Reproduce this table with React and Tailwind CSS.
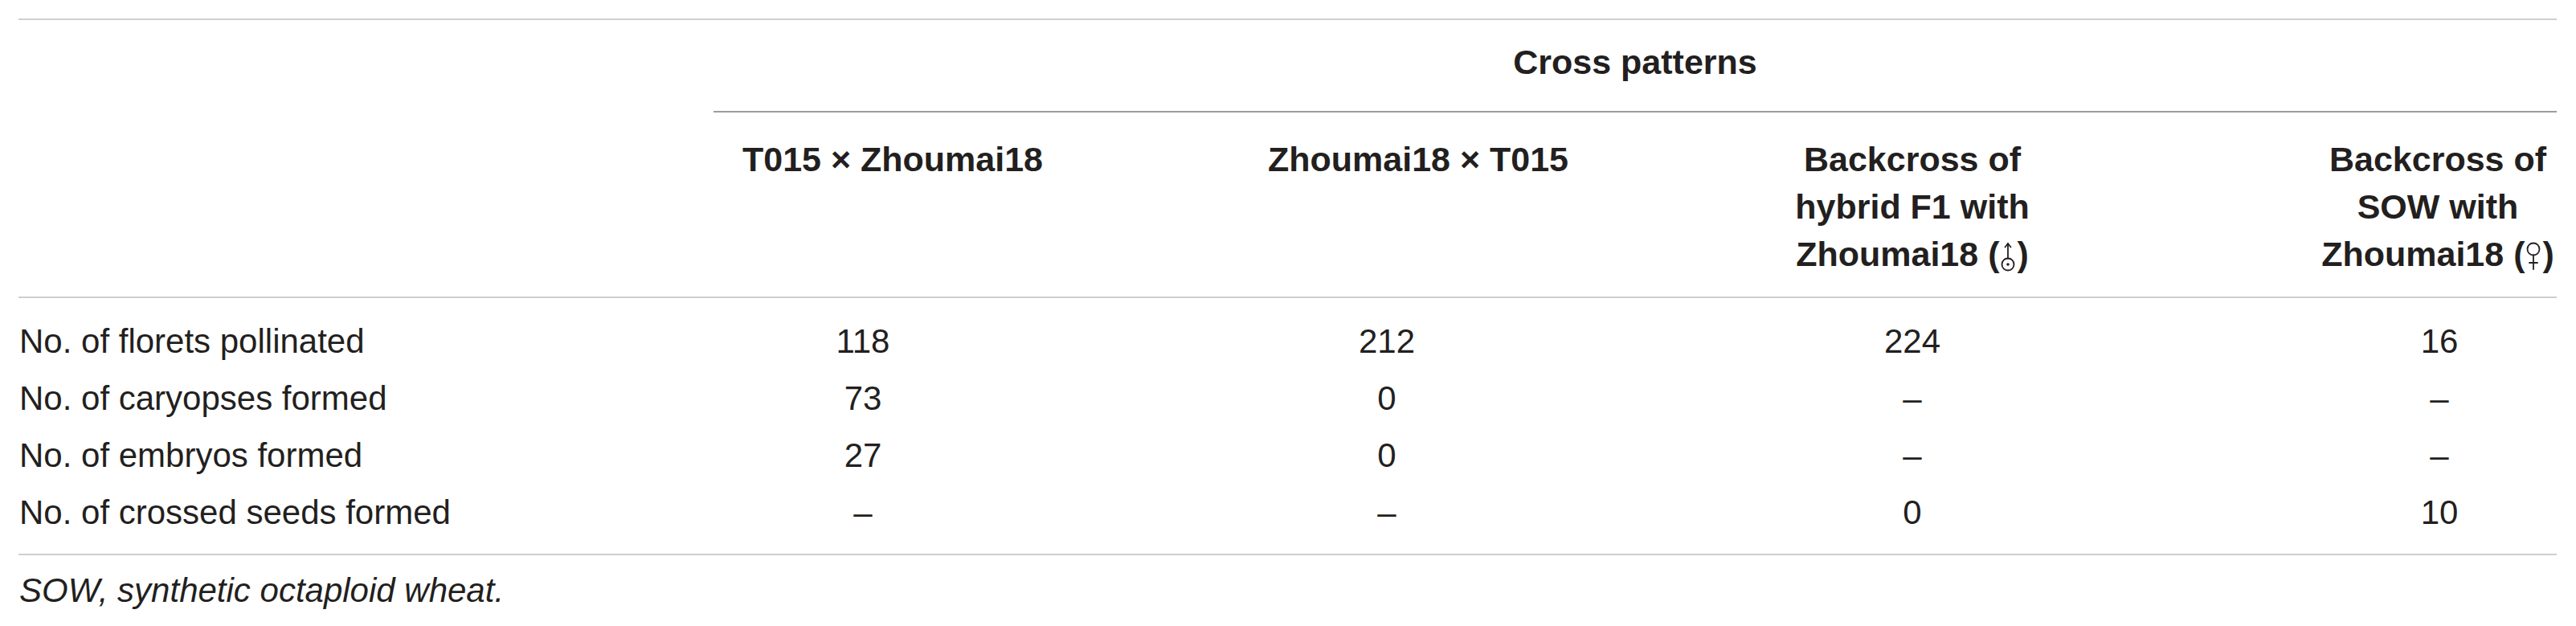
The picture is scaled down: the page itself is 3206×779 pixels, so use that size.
import React from "react";

const Male = () => (
  <svg className="inline-block align-[-8px] mx-[2px]" width="18" height="40" viewBox="0 0 18 40" fill="none" stroke="#231f20" strokeWidth="1.8" strokeLinecap="round" strokeLinejoin="round">
    <circle cx="9" cy="30" r="7.5" />
    <circle cx="9" cy="30" r="0.9" fill="#231f20" />
    <line x1="9" y1="22.5" x2="9" y2="4" />
    <polyline points="5.5,8.5 9,4 12.5,8.5" />
  </svg>
);

const Female = () => (
  <svg className="inline-block align-[-8px] mx-[2px]" width="18" height="40" viewBox="0 0 18 40" fill="none" stroke="#231f20" strokeWidth="1.8" strokeLinecap="round">
    <circle cx="9" cy="11" r="7.5" />
    <line x1="9" y1="18.5" x2="9" y2="36" />
    <line x1="4" y1="28" x2="14" y2="28" />
  </svg>
);

const rows = [
  ["No. of florets pollinated", "118", "212", "224", "16"],
  ["No. of caryopses formed", "73", "0", "–", "–"],
  ["No. of embryos formed", "27", "0", "–", "–"],
  ["No. of crossed seeds formed", "–", "–", "0", "10"],
];

export default function App() {
  return (
    <div className="w-[3206px] h-[779px] bg-white pt-[23px] px-[23px] text-[#231f20] font-['Liberation_Sans',Arial,sans-serif]">
      <div className="border-t-2 border-[#cfcfcf] w-[3159px]">
        {/* header row 1 */}
        <div className="grid grid-cols-[865px_2294px]">
          <div />
          <div className="border-b-2 border-[#9c9c9c] pt-[27px] pb-[36px] text-center text-[43px] leading-[50px] font-bold">
            Cross patterns
          </div>
        </div>
        {/* header row 2 */}
        <div className="grid grid-cols-[865px_652px_652px_376px_614px] border-b-2 border-[#cfcfcf] pt-[29px] pb-[23px] text-[43px] leading-[59px] font-bold">
          <div />
          <div className="pl-[36px] whitespace-nowrap">T015 × Zhoumai18</div>
          <div className="pl-[38px] whitespace-nowrap">Zhoumai18 × T015</div>
          <div className="text-center whitespace-nowrap">
            Backcross of
            <br />
            hybrid F1 with
            <br />
            Zhoumai18 (<Male />)
          </div>
          <div className="flex justify-end">
            <div className="w-[296px] text-center whitespace-nowrap">
              Backcross of
              <br />
              SOW with
              <br />
              Zhoumai18 (<Female />)
            </div>
          </div>
        </div>
        {/* data rows */}
        <div className="border-b-2 border-[#cfcfcf] pt-[18px] pb-[16px] text-[42px] leading-[71px]">
          {rows.map((r) => (
            <div key={r[0]} className="grid grid-cols-[865px_652px_652px_376px_614px]">
              <div className="pl-[1px] whitespace-nowrap">{r[0]}</div>
              <div className="pl-[36px]">
                <div className="w-[300px] text-center">{r[1]}</div>
              </div>
              <div className="pl-[36px]">
                <div className="w-[300px] text-center">{r[2]}</div>
              </div>
              <div className="text-center">{r[3]}</div>
              <div className="flex justify-end">
                <div className="w-[292px] text-center">{r[4]}</div>
              </div>
            </div>
          ))}
        </div>
        <div className="mt-[19px] pl-[1px] text-[42px] leading-[50px] italic">
          SOW, synthetic octaploid wheat.
        </div>
      </div>
    </div>
  );
}
